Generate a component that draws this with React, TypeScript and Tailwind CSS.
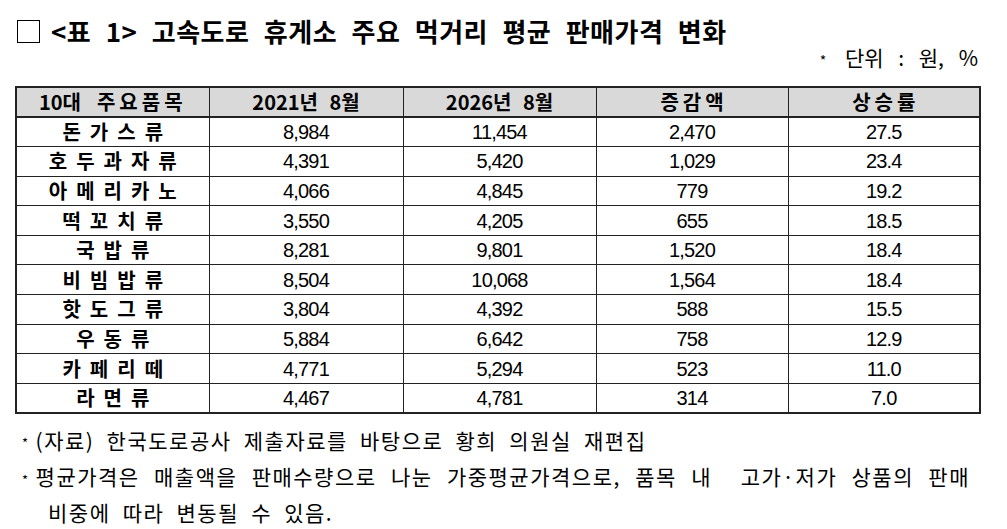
import React from "react";

const rows: [string, string, string, string, string][] = [
  ["돈가스류", "8,984", "11,454", "2,470", "27.5"],
  ["호두과자류", "4,391", "5,420", "1,029", "23.4"],
  ["아메리카노", "4,066", "4,845", "779", "19.2"],
  ["떡꼬치류", "3,550", "4,205", "655", "18.5"],
  ["국밥류", "8,281", "9,801", "1,520", "18.4"],
  ["비빔밥류", "8,504", "10,068", "1,564", "18.4"],
  ["핫도그류", "3,804", "4,392", "588", "15.5"],
  ["우동류", "5,884", "6,642", "758", "12.9"],
  ["카페리떼", "4,771", "5,294", "523", "11.0"],
  ["라면류", "4,467", "4,781", "314", "7.0"],
];

const kr = "font-['Noto_Sans_CJK_KR',sans-serif]";

export default function App() {
  return (
    <div className={`w-[1007px] h-[529px] bg-white text-black overflow-hidden ${kr}`}>
      <div className="flex items-center h-[28px] mt-[17px] ml-[17px]">
        <div className="w-[23px] h-[23px] border-[1.5px] border-black shrink-0" />
        <div className="ml-[11px] text-[26px] leading-[28px] font-bold tracking-[0.5px] [word-spacing:8px] whitespace-nowrap">
          &lt;표 1&gt; 고속도로 휴게소 주요 먹거리 평균 판매가격 변화
        </div>
      </div>
      <div className="flex justify-end pr-[29px] mt-[-1px] h-[26px] text-[21px] leading-[26px] [word-spacing:10px] whitespace-nowrap">
        <span><span className="text-[14px] align-middle mr-[4px]">*</span> 단위 : 원, %</span>
      </div>
      <table className="ml-[15px] mt-[16px] border-collapse border-2 border-[#222] table-fixed w-[964px]">
        <colgroup>
          <col className="w-[193px]" />
          <col className="w-[194px]" />
          <col className="w-[193px]" />
          <col className="w-[192px]" />
          <col className="w-[192px]" />
        </colgroup>
        <thead>
          <tr className="h-[30px] bg-[#d9d9d9] text-[20px] font-bold leading-[22px]">
            <th className="border border-[#222] border-b-2 font-bold whitespace-nowrap"><span>10대</span><span className="ml-[16px] tracking-[4px]">주요품목</span></th>
            <th className="border border-[#222] border-b-2 font-bold [word-spacing:7px]">2021년 8월</th>
            <th className="border border-[#222] border-b-2 font-bold [word-spacing:7px]">2026년 8월</th>
            <th className="border border-[#222] border-b-2 font-bold tracking-[4px] pl-[4px]">증감액</th>
            <th className="border border-[#222] border-b-2 font-bold tracking-[4px] pl-[4px]">상승률</th>
          </tr>
        </thead>
        <tbody>
          {rows.map((r) => (
            <tr key={r[0]} className="h-[29.6px] leading-[22px]">
              <td className="border border-[#222] text-center text-[20px] font-bold tracking-[9px] pl-[9px]">{r[0]}</td>
              {r.slice(1).map((v, i) => (
                <td key={i} className="border border-[#222] text-center text-[20px] font-['Liberation_Sans',sans-serif] tracking-[-0.8px]">{v}</td>
              ))}
            </tr>
          ))}
        </tbody>
      </table>
      <div className="ml-[22px] mt-[10px] text-[21px] leading-[33.5px] tracking-[1.5px] [word-spacing:6px] whitespace-nowrap">
        <div><span className="text-[13px] align-middle mr-[6px]">*</span>(자료) 한국도로공사 제출자료를 바탕으로 황희 의원실 재편집</div>
        <div className="w-[948px] whitespace-normal text-justify [text-align-last:justify]"><span className="text-[13px] align-middle mr-[6px]">*</span>평균가격은 매출액을 판매수량으로 나눈 가중평균가격으로, 품목 내&nbsp; 고가·저가 상품의 판매</div>
        <div className="pl-[26px]">비중에 따라 변동될 수 있음.</div>
      </div>
    </div>
  );
}
